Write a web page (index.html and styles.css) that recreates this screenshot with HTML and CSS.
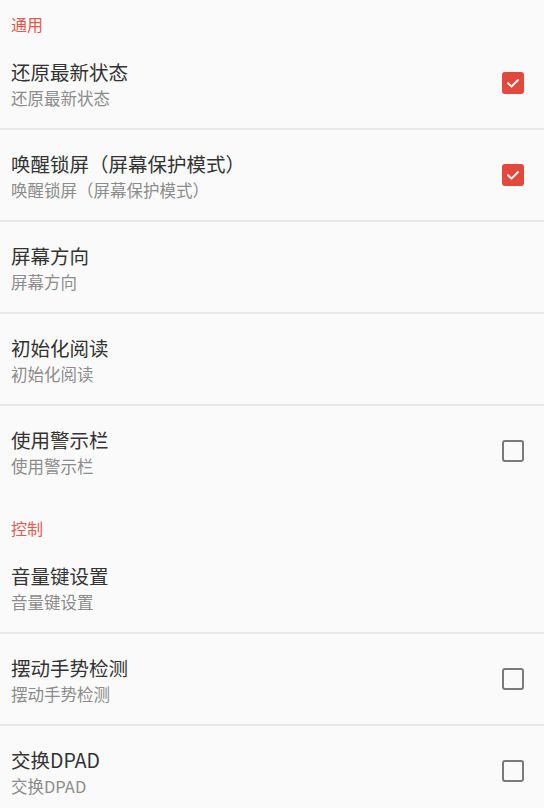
FILE: index.html
```html
<!DOCTYPE html>
<html lang="zh-CN">
<head>
<meta charset="utf-8">
<link rel="stylesheet" href="styles.css">
</head>
<body>
<div class="page">
  <div class="cat">通用</div>
  <div class="row">
    <div class="txt"><div class="title">还原最新状态</div><div class="sub">还原最新状态</div></div>
    <span class="cb on"><svg viewBox="0 0 20 20"><path d="M4.5 10.2 L8.3 14 L15.5 6.6" fill="none" stroke="#fff" stroke-width="2.2" stroke-linecap="round" stroke-linejoin="round"/></svg></span>
  </div>
  <div class="div"></div>
  <div class="row">
    <div class="txt"><div class="title">唤醒锁屏（屏幕保护模式）</div><div class="sub">唤醒锁屏（屏幕保护模式）</div></div>
    <span class="cb on"><svg viewBox="0 0 20 20"><path d="M4.5 10.2 L8.3 14 L15.5 6.6" fill="none" stroke="#fff" stroke-width="2.2" stroke-linecap="round" stroke-linejoin="round"/></svg></span>
  </div>
  <div class="div"></div>
  <div class="row">
    <div class="txt"><div class="title">屏幕方向</div><div class="sub">屏幕方向</div></div>
  </div>
  <div class="div"></div>
  <div class="row">
    <div class="txt"><div class="title">初始化阅读</div><div class="sub">初始化阅读</div></div>
  </div>
  <div class="div"></div>
  <div class="row">
    <div class="txt"><div class="title">使用警示栏</div><div class="sub">使用警示栏</div></div>
    <span class="cb"></span>
  </div>
  <div class="cat cat2">控制</div>
  <div class="row">
    <div class="txt"><div class="title">音量键设置</div><div class="sub">音量键设置</div></div>
  </div>
  <div class="div"></div>
  <div class="row">
    <div class="txt"><div class="title">摆动手势检测</div><div class="sub">摆动手势检测</div></div>
    <span class="cb"></span>
  </div>
  <div class="div"></div>
  <div class="row">
    <div class="txt"><div class="title">交换DPAD</div><div class="sub">交换DPAD</div></div>
    <span class="cb"></span>
  </div>
</div>
</body>
</html>
```
FILE: styles.css
```css
html, body {
  margin: 0;
  padding: 0;
  background: #fafafa;
}
body {
  font-family: "Noto Sans CJK SC", "Noto Sans", sans-serif;
  width: 544px;
  height: 808px;
  overflow: hidden;
}
.page {
  display: flex;
  flex-direction: column;
}
.cat {
  color: #e05a4e;
  font-size: 16px;
  line-height: 24px;
  padding: 12px 11px 2px;
}
.cat2 {
  padding-top: 20px;
}
.row {
  height: 90px;
  display: flex;
  align-items: center;
  justify-content: space-between;
  padding: 0 20px 0 11px;
  box-sizing: border-box;
}
.txt {
  display: flex;
  flex-direction: column;
}
.title {
  font-size: 19.5px;
  line-height: 29px;
  color: #333;
}
.sub {
  font-size: 16.5px;
  line-height: 24px;
  color: #8c8c8c;
}
.div {
  height: 2px;
  background: #e8e8e8;
}
.cb {
  width: 22px;
  height: 22px;
  box-sizing: border-box;
  border: 2.5px solid #7a7a7a;
  border-radius: 3px;
  display: flex;
  align-items: center;
  justify-content: center;
}
.cb.on {
  background: #e4483c;
  border-color: #e4483c;
}
.cb svg {
  width: 20px;
  height: 20px;
}
```
